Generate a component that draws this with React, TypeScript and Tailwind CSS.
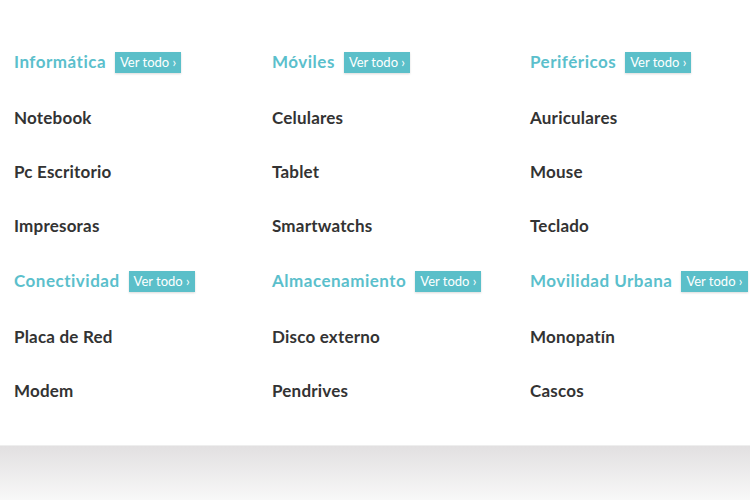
import React from "react";

type Section = { title: string; items: string[] };

const row1: Section[] = [
  { title: "Informática", items: ["Notebook", "Pc Escritorio", "Impresoras"] },
  { title: "Móviles", items: ["Celulares", "Tablet", "Smartwatchs"] },
  { title: "Periféricos", items: ["Auriculares", "Mouse", "Teclado"] },
];
const row2: Section[] = [
  { title: "Conectividad", items: ["Placa de Red", "Modem"] },
  { title: "Almacenamiento", items: ["Disco externo", "Pendrives"] },
  { title: "Movilidad Urbana", items: ["Monopatín", "Cascos"] },
];

function Column({ s }: { s: Section }) {
  return (
    <div className="pl-[14px]">
      <div className="h-[57px] pb-[1px] flex items-center gap-[9px]">
        <span className="text-[17px] font-bold text-[#5bbfcc] tracking-[0.5px]">{s.title}</span>
        <a className="h-[21px] px-[5px] flex items-center bg-[#5bbfc9] text-white text-[13px] leading-none shadow-[0_1px_2px_rgba(0,0,0,0.15)]">
          Ver todo ›
        </a>
      </div>
      {s.items.map((it) => (
        <div key={it} className="h-[54px] flex items-center text-[17px] font-bold text-[#333333] tracking-[0.2px]">
          {it}
        </div>
      ))}
    </div>
  );
}

export default function App() {
  return (
    <div className="w-[750px] h-[500px] overflow-hidden bg-white" style={{ fontFamily: "Lato, 'Open Sans', sans-serif" }}>
      <div className="h-[445px] pt-[34px]">
        <div className="grid grid-cols-[258px_258px_234px]">
          {row1.map((s) => (
            <Column key={s.title} s={s} />
          ))}
        </div>
        <div className="grid grid-cols-[258px_258px_234px]">
          {row2.map((s) => (
            <Column key={s.title} s={s} />
          ))}
        </div>
      </div>
      <div className="h-[55px] border-t border-[#eeeeee] bg-gradient-to-b from-[#e2e0e1] to-[#f8f8f8]" />
    </div>
  );
}
